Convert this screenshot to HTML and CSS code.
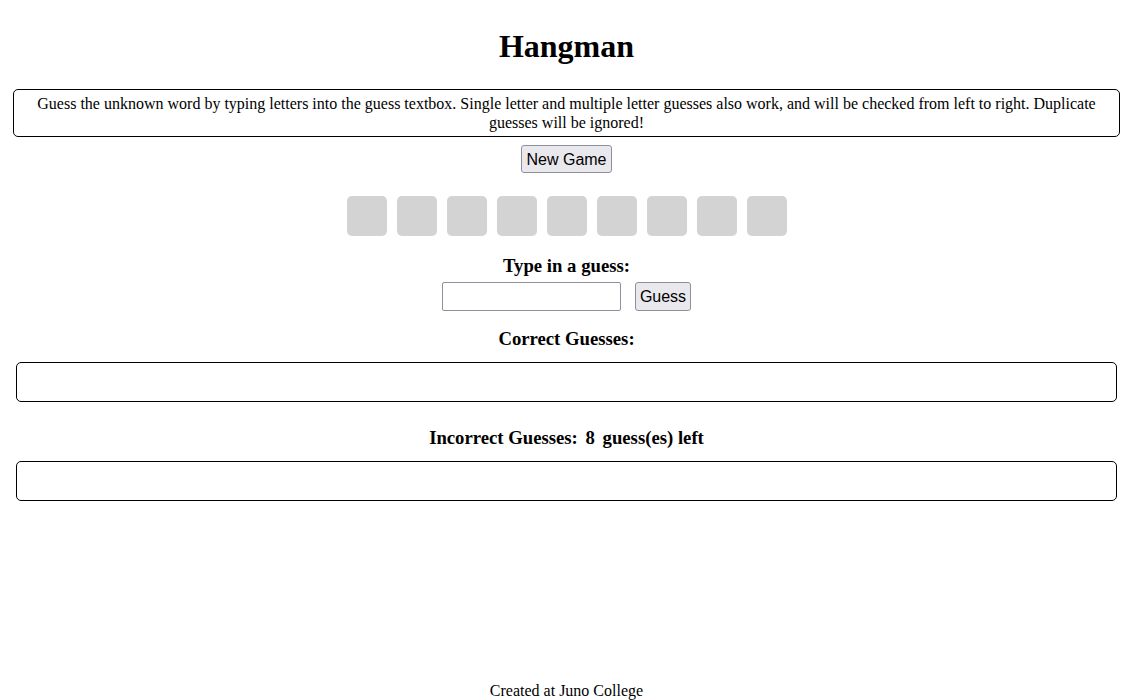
FILE: index.html
```html
<!DOCTYPE html>
<html lang="en">
<head>
<meta charset="utf-8">
<title>Hangman</title>
<link rel="stylesheet" href="styles.css">
</head>
<body>
<div class="page">
  <main class="game">
    <h1 class="title">Hangman</h1>
    <p class="intro">Guess the unknown word by typing letters into the guess textbox. Single letter and multiple letter guesses also work, and will be checked from left to right. Duplicate guesses will be ignored!</p>
    <button class="btn btn-new" type="button">New Game</button>
    <div class="tiles">
      <div class="tile"></div><div class="tile"></div><div class="tile"></div>
      <div class="tile"></div><div class="tile"></div><div class="tile"></div>
      <div class="tile"></div><div class="tile"></div><div class="tile"></div>
    </div>
    <h3 class="label label-type">Type in a guess:</h3>
    <form class="guess-row">
      <input class="guess-input" type="text">
      <button class="btn btn-guess" type="button">Guess</button>
    </form>
    <h3 class="label label-correct">Correct Guesses:</h3>
    <div class="box"></div>
    <h3 class="label label-incorrect">Incorrect Guesses: <span class="count">8</span> guess(es) left</h3>
    <div class="box"></div>
  </main>
  <footer class="footer">Created at Juno College</footer>
</div>
</body>
</html>
```

FILE: styles.css
```css
html, body {
  margin: 0;
  padding: 0;
  background: #fff;
  color: #000;
  font-family: "Liberation Serif", "Times New Roman", serif;
}

.page {
  min-height: 700px;
  box-sizing: border-box;
  padding: 0 8px;
  display: flex;
  flex-direction: column;
}

.game {
  display: flex;
  flex-direction: column;
  align-items: center;
}

.title {
  margin: 28px 0 0;
  font-size: 32px;
  font-weight: bold;
  line-height: 37px;
  text-align: center;
}

.intro {
  align-self: stretch;
  margin: 24px 5px 0;
  padding: 4px 5px;
  border: 1px solid #000;
  border-radius: 5px;
  font-size: 16px;
  line-height: 19px;
  text-align: center;
}

.btn {
  font-family: "Liberation Sans", Arial, sans-serif;
  font-size: 16px;
  line-height: 18px;
  color: #000;
  background: #e9e9ed;
  border: 1px solid #8f8f9d;
  border-radius: 3px;
  padding: 5px 4px 3px;
}

.btn-new {
  margin-top: 8px;
  height: 28px;
}

.tiles {
  display: flex;
  gap: 10px;
  margin-top: 23px;
}

.tile {
  width: 40px;
  height: 40px;
  background: #d3d3d3;
  border-radius: 5px;
}

.label {
  margin: 0;
  font-size: 18.72px;
  font-weight: bold;
  line-height: 22px;
  text-align: center;
}

.label-type { margin-top: 19px; }
.label-correct { margin-top: 17px; }
.label-incorrect { margin-top: 25px; }

.count { margin: 0 3px; }

.guess-row {
  display: flex;
  gap: 14px;
  margin: 5px 0 0;
}

.guess-input {
  box-sizing: border-box;
  width: 179px;
  height: 29px;
  border: 1px solid #8f8f9d;
  border-radius: 2px;
  padding: 2px 4px;
  font-family: "Liberation Sans", Arial, sans-serif;
  font-size: 16px;
}

.btn-guess {
  height: 29px;
  padding: 4px 4px;
}

.box {
  align-self: stretch;
  margin: 12px 8px 0;
  height: 40px;
  box-sizing: border-box;
  border: 1px solid #000;
  border-radius: 5px;
}

.footer {
  margin-top: auto;
  font-size: 16px;
  line-height: 18px;
  text-align: center;
}
```
